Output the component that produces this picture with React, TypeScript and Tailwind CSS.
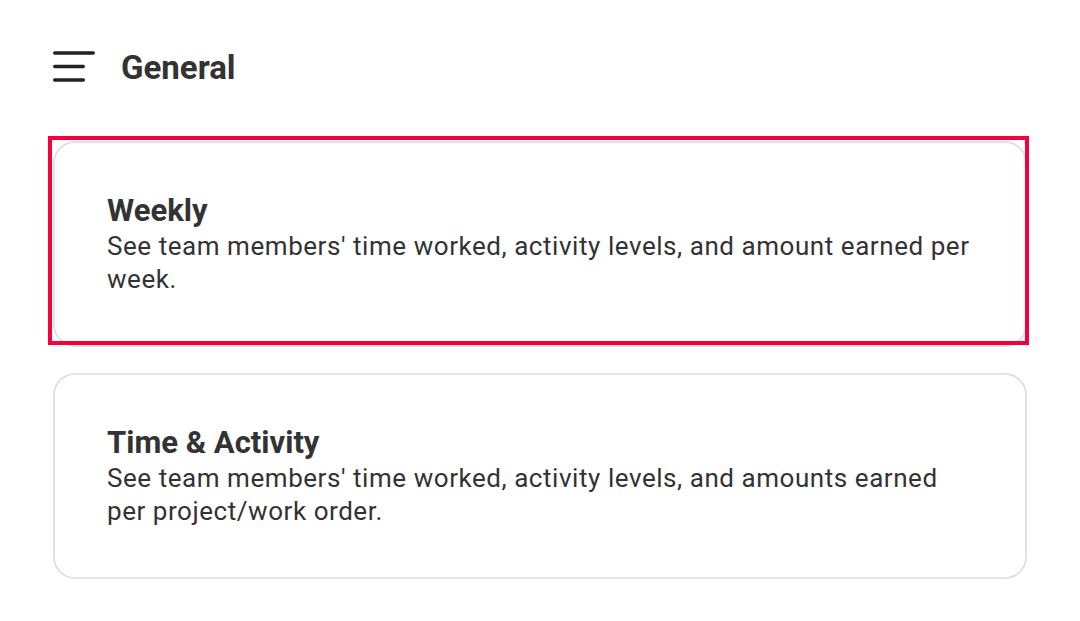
import React from "react";

const cards = [
  {
    title: "Weekly",
    desc: "See team members' time worked, activity levels, and amount earned per week.",
    selected: true,
  },
  {
    title: "Time & Activity",
    desc: "See team members' time worked, activity levels, and amounts earned per project/work order.",
    selected: false,
  },
];

export default function App() {
  return (
    <div
      className="w-[1080px] h-[621px] bg-white text-[#333333] overflow-hidden"
      style={{ fontFamily: "Roboto, 'Noto Sans', sans-serif" }}
    >
      <div className="h-[134px] flex items-center pl-[53px]">
        <svg width="42" height="32" viewBox="0 0 42 32" className="shrink-0">
          <g stroke="#222" strokeWidth="3.4" strokeLinecap="round">
            <line x1="1.7" y1="2" x2="40.3" y2="2" />
            <line x1="1.7" y1="15.5" x2="30.3" y2="15.5" />
            <line x1="1.7" y1="29" x2="30.3" y2="29" />
          </g>
        </svg>
        <h1 className="ml-[26px] text-[33px] font-bold text-[#333] leading-none">
          General
        </h1>
      </div>
      <div className="mt-[7px] pl-[53px] pr-[53px] flex flex-col gap-[26px]">
        {cards.map((c) => (
          <div key={c.title} className="relative">
            <div className="h-[206px] rounded-[22px] border-2 border-[#e2e2e2] pt-[50px] pl-[52px] pr-[50px]">
              <div className="text-[31px] font-bold leading-[36px]">{c.title}</div>
              <div className="text-[26px] leading-[33px] tracking-[0.55px] text-[#333] mt-[1px]">{c.desc}</div>
            </div>
            {c.selected && (
              <div className="absolute left-[-5px] top-[-5px] w-[981px] h-[209px] border-4 border-[#f5003a] pointer-events-none" />
            )}
          </div>
        ))}
      </div>
    </div>
  );
}
